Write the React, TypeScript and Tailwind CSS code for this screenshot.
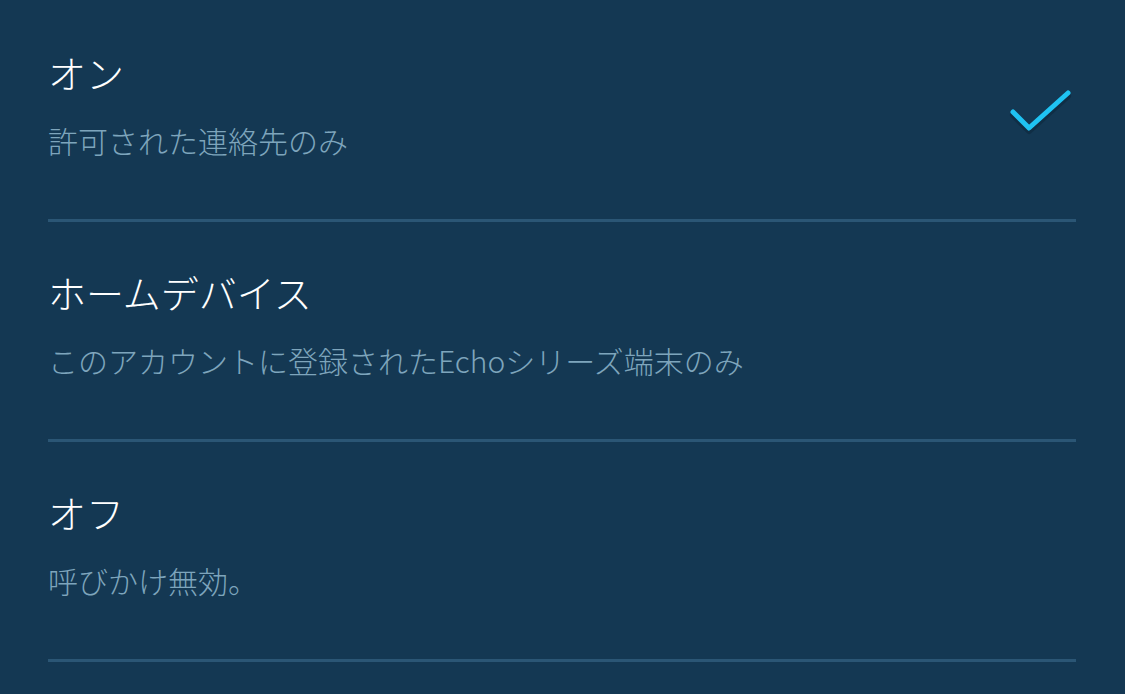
import React from "react";

const options = [
  { title: "オン", desc: "許可された連絡先のみ", selected: true },
  { title: "ホームデバイス", desc: "このアカウントに登録されたEchoシリーズ端末のみ", selected: false },
  { title: "オフ", desc: "呼びかけ無効。", selected: false },
];

function Check() {
  return (
    <svg width="70" height="56" viewBox="0 0 70 56" fill="none" className="mt-[81px] shrink-0">
      <path d="M7 29 L23 45 L62 10" stroke="#0b2436" strokeOpacity="0.45" strokeWidth="6" strokeLinecap="round" strokeLinejoin="round" transform="translate(0 3)" />
      <path d="M7 29 L23 45 L62 10" stroke="#1fc3f3" strokeWidth="5" strokeLinecap="round" strokeLinejoin="round" />
    </svg>
  );
}

export default function App() {
  return (
    <div
      className="min-h-screen w-full bg-[#143853] pt-[2px] pl-[48px] pr-[49px]"
      style={{ fontFamily: '"Noto Sans CJK JP", "Noto Sans", sans-serif' }}
    >
      {options.map((o) => (
        <div
          key={o.title}
          className="flex items-start justify-between border-b-[3px] border-[#2b5675] h-[220px]"
        >
          <div className="flex flex-col pt-[46px]">
            <div className="text-[38px] leading-[48px] font-light text-white">{o.title}</div>
            <div className="mt-[24px] text-[30px] leading-[40px] font-light text-[#7ea5bc]">{o.desc}</div>
          </div>
          {o.selected && <Check />}
        </div>
      ))}
    </div>
  );
}
